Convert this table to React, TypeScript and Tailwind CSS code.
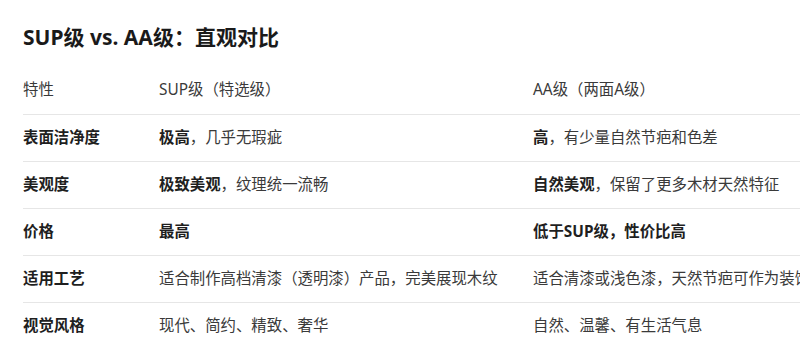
import React from 'react';

type Cell = { b?: string; t?: string };
type Row = { label: string; sup: Cell; aa: Cell };

const rows: Row[] = [
  { label: '表面洁净度', sup: { b: '极高', t: '，几乎无瑕疵' }, aa: { b: '高', t: '，有少量自然节疤和色差' } },
  { label: '美观度', sup: { b: '极致美观', t: '，纹理统一流畅' }, aa: { b: '自然美观', t: '，保留了更多木材天然特征' } },
  { label: '价格', sup: { b: '最高' }, aa: { b: '低于SUP级，性价比高' } },
  {
    label: '适用工艺',
    sup: { t: '适合制作高档清漆（透明漆）产品，完美展现木纹' },
    aa: { t: '适合清漆或浅色漆，天然节疤可作为装饰元素，别具风格' },
  },
  { label: '视觉风格', sup: { t: '现代、简约、精致、奢华' }, aa: { t: '自然、温馨、有生活气息' } },
];

function Content({ c }: { c: Cell }) {
  return (
    <>
      {c.b && <strong className="font-bold text-[#1f1f1f]">{c.b}</strong>}
      {c.t}
    </>
  );
}

export default function App() {
  return (
    <div
      className="w-[800px] h-[338px] overflow-hidden bg-white text-[#3a3a3a]"
      style={{ fontFamily: '"Noto Sans", "Noto Sans CJK SC", sans-serif' }}
    >
      <div className="pl-[23px] pt-[22px]">
        <h1 className="text-[21px] leading-[30px] font-bold text-[#1a1a1a] whitespace-nowrap">
          SUP级 vs. AA级：直观对比
        </h1>
        <table className="mt-[14px] w-[1000px] border-collapse text-[15.4px] whitespace-nowrap">
          <thead>
            <tr className="h-[48px] border-b border-[#e6e6e6]">
              <th className="w-[136px] text-left font-normal">特性</th>
              <th className="w-[374px] text-left font-normal">SUP级（特选级）</th>
              <th className="text-left font-normal">AA级（两面A级）</th>
            </tr>
          </thead>
          <tbody>
            {rows.map((r, i) => (
              <tr key={r.label} className={`h-[47px] ${i < rows.length - 1 ? 'border-b border-[#e6e6e6]' : ''}`}>
                <td className="font-bold text-[#1f1f1f]">{r.label}</td>
                <td>
                  <Content c={r.sup} />
                </td>
                <td>
                  <Content c={r.aa} />
                </td>
              </tr>
            ))}
          </tbody>
        </table>
      </div>
    </div>
  );
}
